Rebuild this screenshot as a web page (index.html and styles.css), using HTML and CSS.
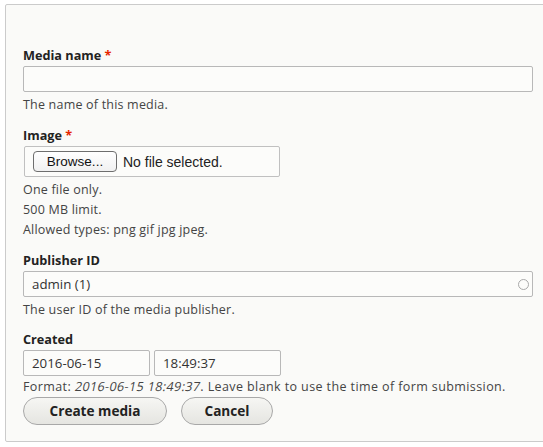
FILE: index.html
```html
<!DOCTYPE html>
<html>
<head>
<meta charset="utf-8">
<link rel="stylesheet" href="styles.css">
</head>
<body>
<div class="panel">
  <div class="item">
    <label class="label">Media name <span class="req">*</span></label>
    <div class="input wide"></div>
    <div class="desc">The name of this media.</div>
  </div>
  <div class="item">
    <label class="label">Image <span class="req">*</span></label>
    <div class="file">
      <span class="browse">Browse...</span>
      <span class="nofile">No file selected.</span>
    </div>
    <div class="desc first">One file only.<br>500 MB limit.<br>Allowed types: png gif jpg jpeg.</div>
  </div>
  <div class="item pub">
    <label class="label">Publisher ID</label>
    <div class="input wide auto"><span>admin (1)</span><span class="throbber"></span></div>
    <div class="desc">The user ID of the media publisher.</div>
  </div>
  <div class="item last">
    <label class="label">Created</label>
    <div class="row">
      <div class="input short">2016-06-15</div>
      <div class="input short">18:49:37</div>
    </div>
    <div class="desc tight">Format: <em class="slant">2016-06-15 18:49:37</em>. Leave blank to use the time of form submission.</div>
  </div>
  <div class="actions">
    <span class="btn create">Create media</span>
    <span class="btn cancel">Cancel</span>
  </div>
</div>
</body>
</html>
```
FILE: styles.css
```css
html, body {
  margin: 0;
  padding: 0;
  background: #ffffff;
  overflow: hidden;
}
body {
  font-family: "Open Sans", "DejaVu Sans", sans-serif;
  color: #333;
}
.panel {
  margin: 4px 0 0 5px;
  width: 560px;
  border: 1px solid #cbcbcb;
  border-radius: 2px;
  background: #fafaf8;
  padding: 41px 0 16px 17px;
  box-sizing: border-box;
}
.item {
  margin-bottom: 11px;
}
.item.pub {
  margin-bottom: 10px;
}
.item.last {
  margin-bottom: 0;
}
.label {
  display: block;
  font-weight: bold;
  font-size: 12.7px;
  line-height: 18px;
  color: #222;
  margin-bottom: 2px;
}
.req {
  color: #e62600;
}
.input {
  box-sizing: border-box;
  height: 26px;
  border: 1px solid #b8b8b8;
  border-radius: 2px;
  background: #fcfcfa;
  font-size: 13.3px;
  line-height: 24px;
  padding: 0 8px;
  color: #333;
}
.wide {
  width: 510px;
}
.auto {
  display: flex;
  justify-content: space-between;
  align-items: center;
  padding-right: 3px;
}
.throbber {
  box-sizing: border-box;
  width: 11px;
  height: 11px;
  border: 1.6px solid #a9a9a9;
  border-radius: 50%;
}
.desc {
  font-size: 12.5px;
  line-height: 20px;
  margin-top: 3px;
  color: #444;
  letter-spacing: 0.2px;
}
.desc.tight {
  margin-top: 1px;
  letter-spacing: 0.4px;
}
.slant {
  font-style: normal;
  display: inline-block;
  transform: skewX(-12deg);
}
.file {
  box-sizing: border-box;
  width: 256px;
  height: 31px;
  border: 1px solid #c0c0c0;
  border-radius: 2px;
  background: #fcfcfa;
  margin-left: 1px;
  display: flex;
  align-items: center;
  padding-left: 8px;
  gap: 6px;
}
.browse {
  box-sizing: border-box;
  width: 84px;
  height: 21px;
  border: 1px solid #6e6e6e;
  border-radius: 4px;
  background: linear-gradient(#ffffff, #f1f1f1);
  font-family: "Liberation Sans", Arial, sans-serif;
  font-size: 13.5px;
  line-height: 19px;
  text-align: center;
  color: #111;
}
.nofile {
  font-family: "Liberation Sans", Arial, sans-serif;
  font-size: 14px;
  color: #222;
}
.row {
  display: flex;
  gap: 4px;
}
.short {
  width: 127px;
}
.actions {
  display: flex;
  gap: 14px;
  margin-top: 0;
}
.btn {
  box-sizing: border-box;
  height: 28px;
  border: 1px solid #a8a8a8;
  border-radius: 14px;
  background: linear-gradient(#f6f6f3, #e5e5e1);
  font-weight: bold;
  font-size: 13.6px;
  line-height: 26px;
  text-align: center;
  color: #222;
}
.create {
  width: 144px;
}
.cancel {
  width: 92px;
}
```
